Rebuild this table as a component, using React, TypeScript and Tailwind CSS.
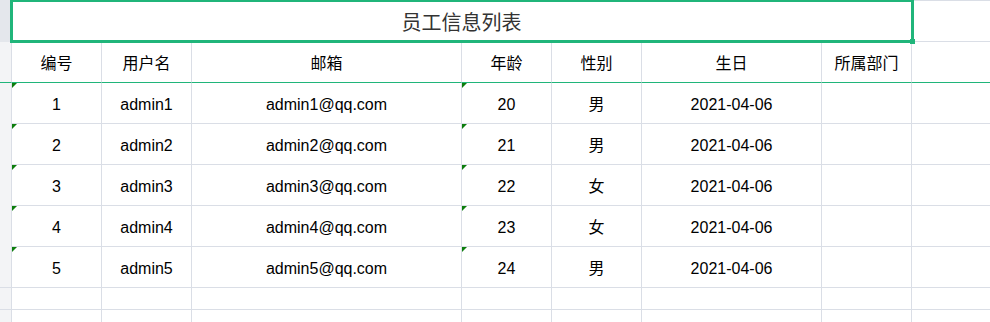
import React from "react";

const rows = [
  { id: 1, user: "admin1", mail: "admin1@qq.com", age: 20, sex: "男", birth: "2021-04-06" },
  { id: 2, user: "admin2", mail: "admin2@qq.com", age: 21, sex: "男", birth: "2021-04-06" },
  { id: 3, user: "admin3", mail: "admin3@qq.com", age: 22, sex: "女", birth: "2021-04-06" },
  { id: 4, user: "admin4", mail: "admin4@qq.com", age: 23, sex: "女", birth: "2021-04-06" },
  { id: 5, user: "admin5", mail: "admin5@qq.com", age: 24, sex: "男", birth: "2021-04-06" },
];

const headers = ["编号", "用户名", "邮箱", "年龄", "性别", "生日", "所属部门"];

const cols = "grid grid-cols-[12px_90px_90px_270px_90px_90px_180px_90px_1fr]";
const cell = "border-r border-b border-[#dadee6] flex items-center justify-center pt-[3px]";

// little green triangle in a cell corner
const Flag = () => (
  <span className="absolute left-0 top-0 w-0 h-0 border-t-[5px] border-r-[5px] border-t-[#0d7d0d] border-r-transparent" />
);

export default function App() {
  return (
    <div
      className="relative w-[990px] h-[322px] overflow-hidden bg-white text-[16px] text-black"
      style={{ fontFamily: '"Liberation Sans", "Noto Sans CJK SC", sans-serif' }}
    >
      {/* title row */}
      <div className={`${cols} h-[42px]`}>
        <div className="bg-[#e4e7ec] border-r border-[#dadee6]" />
        <div className="col-span-7 border-r border-b border-[#dadee6] flex items-center justify-center pt-[4px] text-[20px] text-[#333]">
          员工信息列表
        </div>
        <div className="border-t border-b border-[#dadee6]" />
      </div>

      {/* header row */}
      <div className={`${cols} h-[41px]`}>
        <div className="bg-[#f3f4f6] border-r border-b border-r-[#dadee6] border-b-[#20b57a]" />
        {headers.map((h) => (
          <div key={h} className="border-r border-b border-r-[#dadee6] border-b-[#20b57a] flex items-center justify-center pt-[3px]">
            {h}
          </div>
        ))}
        <div className="border-b border-[#20b57a]" />
      </div>

      {/* data rows */}
      {rows.map((r, i) => (
        <div key={r.id} className={`${cols} h-[41px]`}>
          <div className={`bg-[#f3f4f6] border-r border-[#dadee6] ${i === 4 ? "border-b" : ""}`} />
          <div className={`${cell} relative`}>
            <Flag />
            {r.id}
          </div>
          <div className={cell}>{r.user}</div>
          <div className={cell}>{r.mail}</div>
          <div className={`${cell} relative`}>
            <Flag />
            {r.age}
          </div>
          <div className={cell}>{r.sex}</div>
          <div className={cell}>{r.birth}</div>
          <div className={cell} />
          <div className="border-b border-[#dadee6]" />
        </div>
      ))}

      {/* empty rows */}
      {[0, 1].map((k) => (
        <div key={k} className={`${cols} h-[22px]`}>
          <div className="bg-[#f3f4f6] border-r border-b border-[#dadee6]" />
          {[0, 1, 2, 3, 4, 5, 6].map((c) => (
            <div key={c} className={cell} />
          ))}
          <div className="border-b border-[#dadee6]" />
        </div>
      ))}

      {/* selection box over the title */}
      <div className="absolute left-[10px] top-[-1px] w-[904px] h-[44px] border-[3px] border-[#20b57a] pointer-events-none" />
      <div className="absolute left-[910px] top-[39px] w-[5px] h-[5px] bg-[#20b57a]" />
    </div>
  );
}
